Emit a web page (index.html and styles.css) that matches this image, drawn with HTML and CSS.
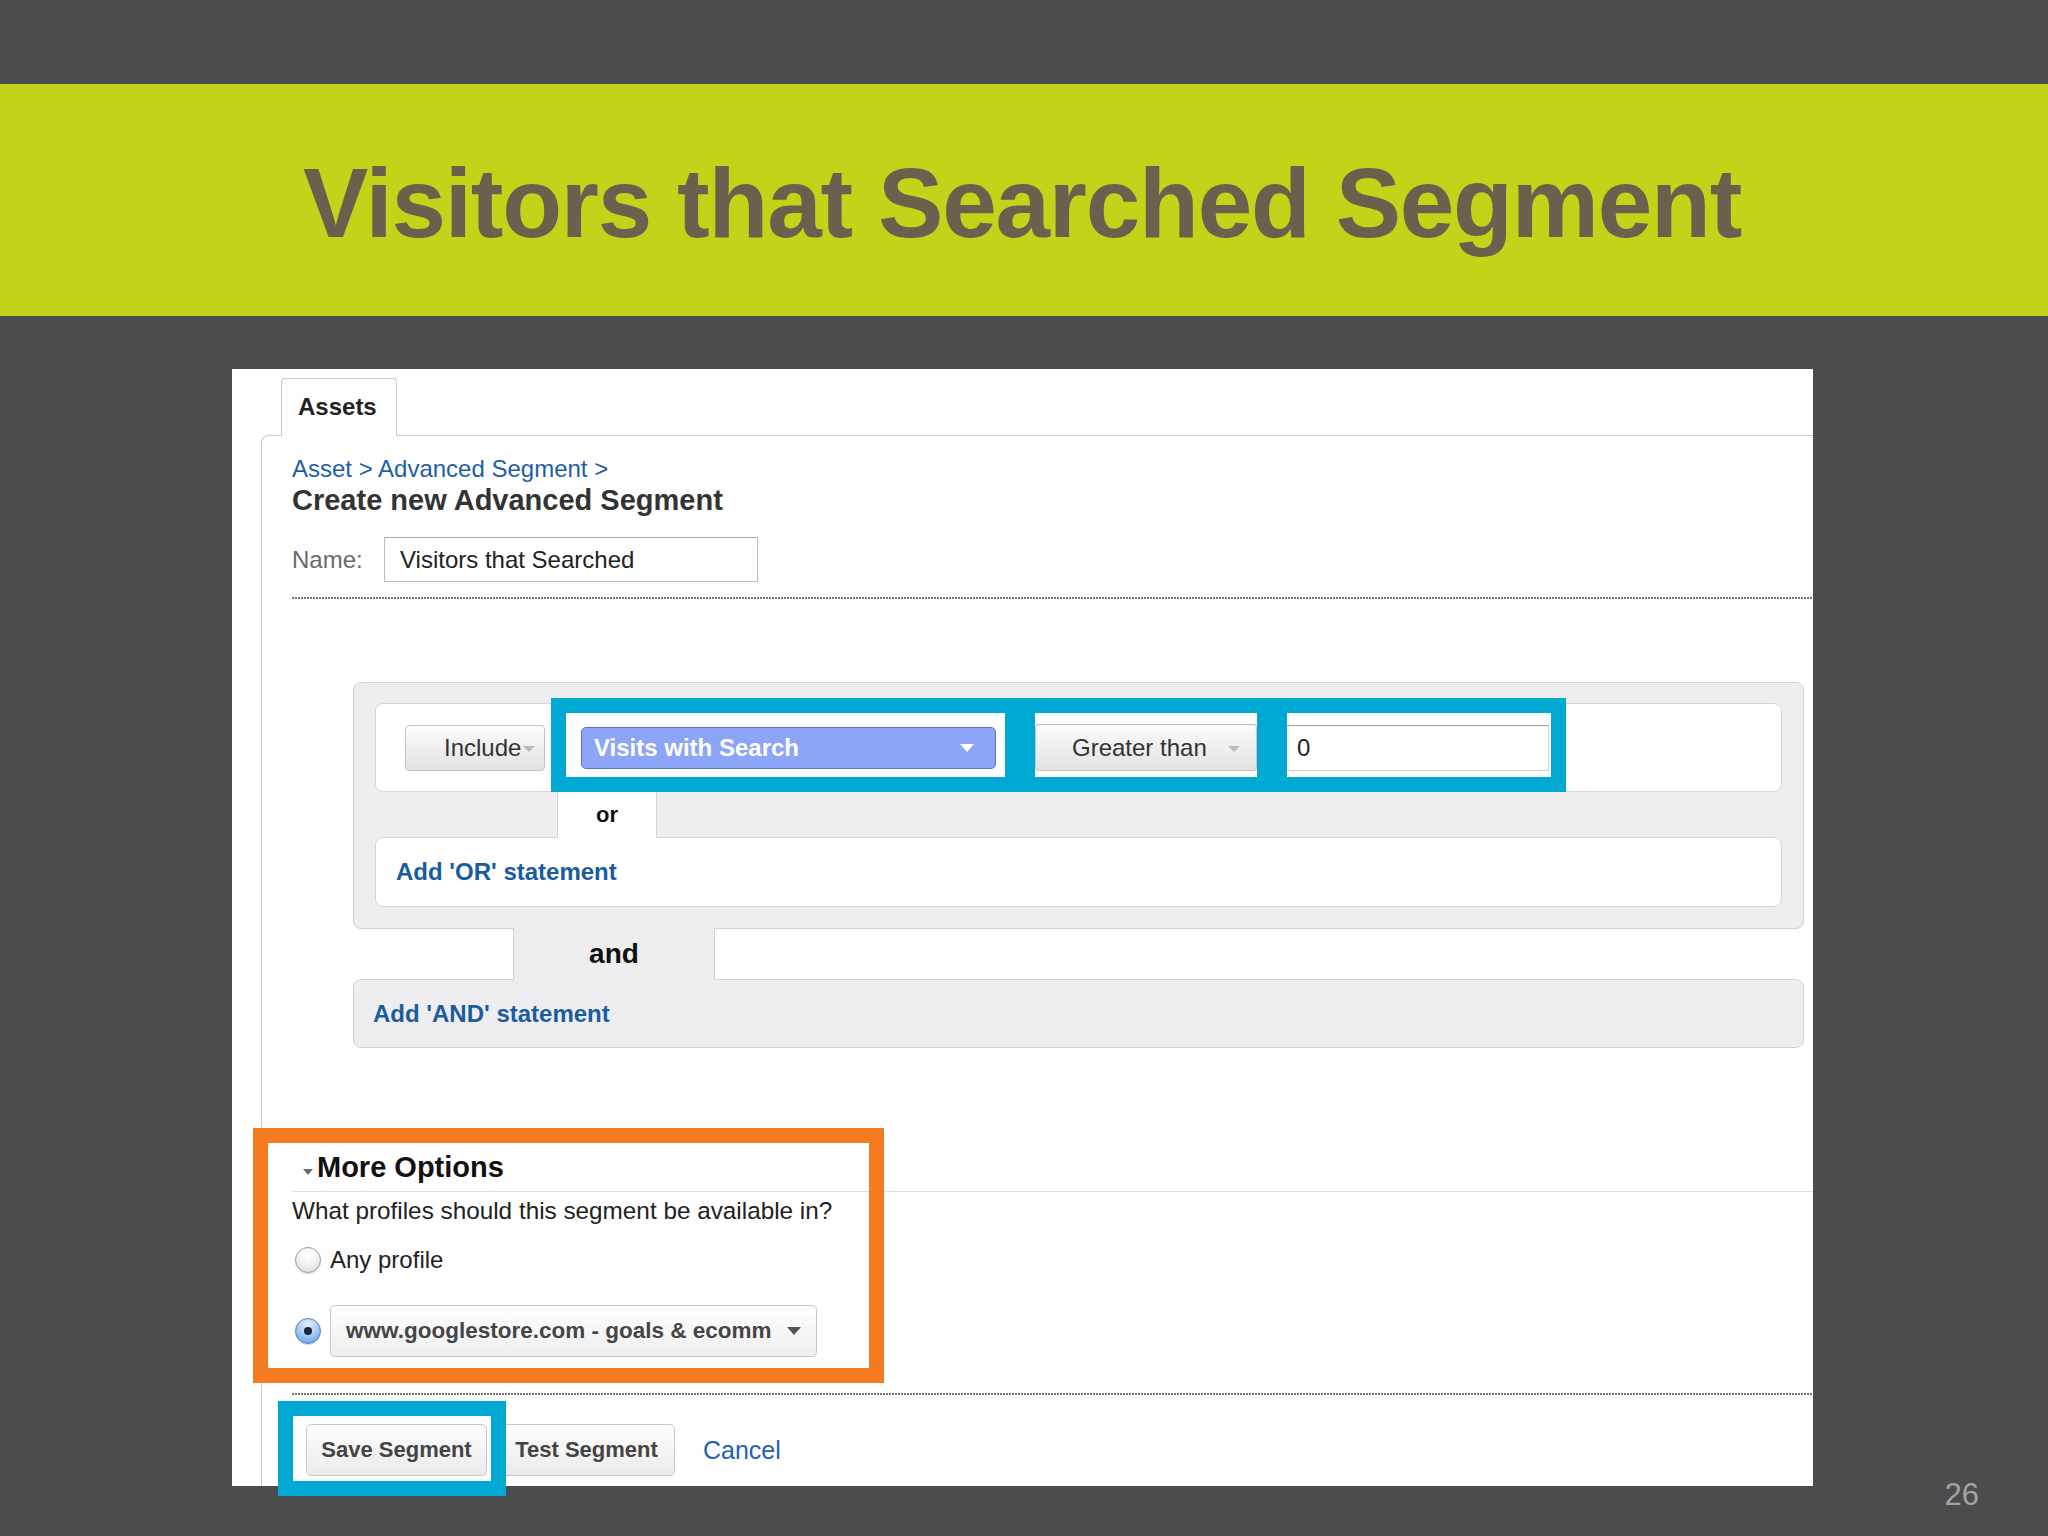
FILE: index.html
```html
<!DOCTYPE html>
<html>
<head>
<meta charset="utf-8">
<title>Visitors that Searched Segment</title>
<link rel="stylesheet" href="styles.css">
</head>
<body>
<div class="topbar"></div>
<header class="titleband"><h1>Visitors that Searched Segment</h1></header>
<div class="stage">
  <div class="panel">
    <div class="tabs"><div class="tab">Assets</div></div>
    <div class="content">
      <div class="crumb">Asset &gt; Advanced Segment &gt;</div>
      <h2 class="heading">Create new Advanced Segment</h2>
      <div class="namerow">
        <span class="namelabel">Name:</span>
        <div class="nameinput">Visitors that Searched</div>
      </div>
      <div class="dotted"></div>

      <div class="builder">
        <div class="andgroup">
          <div class="orrow">
            <div class="btn include">Include<svg class="caret" width="14" height="8" viewBox="0 0 14 8"><path d="M1 1h12L7 7z" fill="#b9b9b9"/></svg></div>
            <div class="dim">Visits with Search<svg width="14" height="8" viewBox="0 0 14 8"><path d="M0 0h14L7 8z" fill="#fff"/></svg></div>
            <div class="btn op">Greater than<svg class="caret2" width="14" height="8" viewBox="0 0 14 8"><path d="M1 1h12L7 7z" fill="#bdbdbd"/></svg></div>
            <div class="valinput">0</div>
            <div class="hl hl1"></div>
            <div class="hl hl2"></div>
            <div class="hl hl3"></div>
          </div>
          <div class="ortab">or</div>
          <div class="addor">Add 'OR' statement</div>
        </div>
        <div class="andtab">and</div>
        <div class="addand">Add 'AND' statement</div>
      </div>

      <section class="more">
        <h3 class="morehead"><svg class="morecaret" width="14" height="8" viewBox="0 0 14 8"><path d="M2 1h10L7 7z" fill="#6a6a6a"/></svg>More Options</h3>
        <div class="question">What profiles should this segment be available in?</div>
        <div class="radiorow first">
          <span class="radio"></span>
          <span class="radiotext">Any profile</span>
        </div>
        <div class="radiorow second">
          <span class="radio checked"></span>
          <div class="select">www.googlestore.com - goals &amp; ecomm<svg width="14" height="8" viewBox="0 0 14 8"><path d="M0 0h14L7 8z" fill="#555"/></svg></div>
        </div>
        <div class="orangebox"></div>
      </section>

      <div class="dotted dotted2"></div>

      <div class="actions">
        <div class="abtn save">Save Segment</div>
        <div class="abtn test">Test Segment</div>
        <span class="cancel">Cancel</span>
        <div class="savehl"></div>
      </div>
    </div>
  </div>
  <div class="pageno">26</div>
</div>
</body>
</html>
```

FILE: styles.css
```css
* { box-sizing: border-box; }
html, body { margin: 0; padding: 0; }
body {
  width: 2048px;
  height: 1536px;
  overflow: hidden;
  background: #4b4c4e;
  font-family: "Liberation Sans", Arial, Helvetica, sans-serif;
}

.topbar { height: 84px; }

.titleband {
  height: 232px;
  background: #c5d21a;
  padding: 70px 0 0 303px;
}
.titleband h1 {
  margin: 0;
  font-size: 98px;
  line-height: 98px;
  font-weight: bold;
  letter-spacing: -1.2px;
  color: #6b5f4e;
  white-space: nowrap;
}

.stage {
  display: flex;
  align-items: flex-end;
  margin-top: 53px;
}

.panel {
  margin-left: 232px;
  width: 1581px;
  height: 1117px;
  background: #fff;
  padding-top: 9px;
  display: flex;
  flex-direction: column;
}

.tabs { display: flex; padding-left: 49px; }
.tab {
  width: 116px;
  height: 58px;
  margin-bottom: -1px;
  border: 1px solid #c9c9c9;
  border-bottom: none;
  border-radius: 4px 4px 0 0;
  background: #fff;
  padding: 14px 0 0 16px;
  font-size: 24px;
  line-height: 28px;
  font-weight: bold;
  color: #222;
  position: relative;
  z-index: 1;
}

.content {
  flex: 1;
  margin-left: 29px;
  border-top: 1px solid #c9c9c9;
  border-left: 1px solid #c9c9c9;
  border-top-left-radius: 8px;
  padding: 19px 0 0 30px;
}

.crumb {
  font-size: 24px;
  line-height: 28px;
  color: #1d5ea7;
}
.heading {
  margin: 0;
  font-size: 29px;
  line-height: 35px;
  font-weight: bold;
  color: #333;
}

.namerow {
  display: flex;
  align-items: center;
  margin-top: 19px;
}
.namelabel {
  width: 92px;
  font-size: 24px;
  color: #6a6a6a;
}
.nameinput {
  width: 374px;
  height: 45px;
  border: 1px solid #bdbdbd;
  border-top-color: #a9a9a9;
  padding-left: 15px;
  display: flex;
  align-items: center;
  font-size: 24px;
  color: #222;
}

.dotted {
  margin-top: 15px;
  height: 2px;
  background: repeating-linear-gradient(90deg, #727272 0 2px, transparent 2px 3px);
}

/* condition builder */
.builder { margin: 83px 9px 0 61px; }

.andgroup {
  background: #eeeef0;
  border: 1px solid #d3d3d6;
  border-radius: 8px;
  padding: 20px 21px 21px;
}

.orrow {
  position: relative;
  height: 89px;
  background: #fff;
  border: 1px solid #d6d6d8;
  border-radius: 8px;
  display: flex;
  align-items: center;
  padding-left: 29px;
}

.btn {
  display: flex;
  align-items: center;
  border: 1px solid #c4c4c4;
  border-radius: 4px;
  background: linear-gradient(#fcfcfc, #e2e2e2);
  font-size: 24px;
  color: #333;
}
.include {
  width: 140px;
  height: 46px;
  padding-left: 38px;
}
.caret { margin-left: 1px; margin-top: 2px; }

.dim {
  width: 415px;
  height: 42px;
  margin-left: 36px;
  background: #8da5f7;
  border: 1px solid #5d72c8;
  border-radius: 5px;
  display: flex;
  align-items: center;
  justify-content: space-between;
  padding: 0 21px 0 12px;
  font-size: 24px;
  font-weight: bold;
  color: #fff;
}

.op {
  width: 222px;
  height: 47px;
  margin-left: 39px;
  padding-left: 36px;
  border-color: #b9b9b9 #c4c4c4 #c4c4c4;
}
.caret2 { margin-left: 20px; margin-top: 2px; }

.valinput {
  width: 264px;
  height: 46px;
  margin-left: 28px;
  border: 1px solid #cfcfcf;
  border-top-color: #9c9c9c;
  display: flex;
  align-items: center;
  padding-left: 11px;
  font-size: 24px;
  color: #222;
}

.hl {
  position: absolute;
  top: -6px;
  height: 94px;
  border: 15px solid #00a9d4;
  z-index: 2;
}
.hl1 { left: 175px; width: 469px; }
.hl2 { left: 644px; width: 252px; }
.hl3 { left: 896px; width: 294px; }

.ortab {
  position: relative;
  z-index: 1;
  width: 100px;
  height: 47px;
  margin: -1px 0 -1px 182px;
  background: #fff;
  border-left: 1px solid #d6d6d8;
  border-right: 1px solid #d6d6d8;
  display: flex;
  align-items: center;
  justify-content: center;
  font-size: 22px;
  font-weight: bold;
  color: #111;
}

.addor {
  height: 70px;
  background: #fff;
  border: 1px solid #d6d6d8;
  border-radius: 8px;
  display: flex;
  align-items: center;
  padding-left: 20px;
  font-size: 24px;
  font-weight: bold;
  color: #1b5c9e;
}

.andtab {
  position: relative;
  z-index: 1;
  width: 202px;
  height: 52px;
  margin: -1px 0 -1px 160px;
  background: #eeeef0;
  border-left: 1px solid #d3d3d6;
  border-right: 1px solid #d3d3d6;
  display: flex;
  align-items: center;
  justify-content: center;
  font-size: 28px;
  font-weight: bold;
  color: #111;
}

.addand {
  height: 69px;
  background: #eeeef0;
  border: 1px solid #d3d3d6;
  border-radius: 8px;
  display: flex;
  align-items: center;
  padding-left: 19px;
  font-size: 24px;
  font-weight: bold;
  color: #1b5c9e;
}

/* more options */
.more {
  position: relative;
  margin-top: 102px;
}
.morehead {
  margin: 0;
  display: flex;
  align-items: center;
  padding: 0 0 7px 9px;
  border-bottom: 1px solid #dedede;
  font-size: 29px;
  line-height: 34px;
  font-weight: bold;
  color: #111;
}
.morecaret { margin-top: 10px; margin-right: 2px; }

.question {
  margin-top: 5px;
  font-size: 24.3px;
  line-height: 28px;
  color: #222;
}

.radiorow {
  display: flex;
  align-items: center;
  padding-left: 3px;
}
.radiorow.first { margin-top: 21px; height: 28px; }
.radiorow.second { margin-top: 31px; }

.radio {
  width: 26px;
  height: 26px;
  border-radius: 50%;
  border: 1px solid #9d9d9d;
  background: radial-gradient(circle at 50% 30%, #ffffff 0%, #f1f1f1 45%, #d6d6d6 100%);
  box-shadow: 0 1px 1px rgba(0,0,0,0.15);
  flex: none;
  display: flex;
  align-items: center;
  justify-content: center;
}
.radio.checked {
  border-color: #5a7eb4;
  background: radial-gradient(circle at 50% 25%, #e3efff 0%, #a9ccf7 45%, #5c98e6 100%);
}
.radio.checked::after {
  content: "";
  width: 8px;
  height: 8px;
  border-radius: 50%;
  background: #1a2535;
}
.radiotext {
  margin-left: 9px;
  font-size: 24px;
  color: #222;
}

.select {
  margin-left: 9px;
  width: 487px;
  height: 52px;
  border: 1px solid #c6c6c6;
  border-radius: 5px;
  background: linear-gradient(#ffffff, #eeeeee);
  display: flex;
  align-items: center;
  justify-content: space-between;
  padding: 0 15px 0 15px;
  font-size: 22.5px;
  font-weight: bold;
  color: #454545;
}

.orangebox {
  position: absolute;
  top: -22px;
  left: -39px;
  width: 631px;
  height: 255px;
  border: 15px solid #f47b20;
  z-index: 2;
}

.dotted2 { margin-top: 36px; }

/* actions */
.actions {
  position: relative;
  margin-top: 29px;
  display: flex;
  align-items: center;
  padding-left: 14px;
}
.abtn {
  height: 52px;
  border: 1px solid #c8c8c8;
  border-radius: 5px;
  background: linear-gradient(#fdfdfd, #ebebeb);
  display: flex;
  align-items: center;
  justify-content: center;
  font-size: 22px;
  font-weight: bold;
  color: #444;
}
.save { width: 181px; }
.test { width: 177px; margin-left: 11px; }
.cancel {
  margin-left: 28px;
  font-size: 25px;
  color: #1f62b0;
}
.savehl {
  position: absolute;
  left: -14px;
  top: -23px;
  width: 228px;
  height: 95px;
  border: 15px solid #00a9d4;
  z-index: 2;
}

.pageno {
  margin-left: auto;
  margin-right: 69px;
  margin-bottom: -24px;
  font-size: 31px;
  line-height: 31px;
  color: #a3a3a3;
}
```
